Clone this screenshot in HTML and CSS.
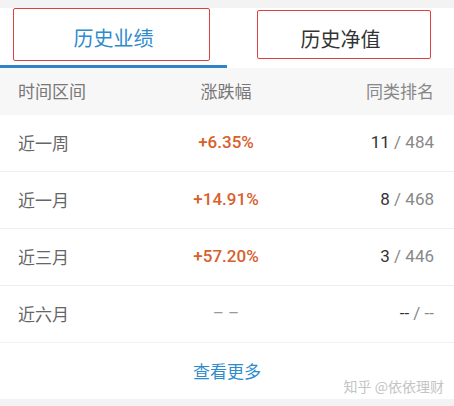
FILE: index.html
```html
<!DOCTYPE html>
<html lang="zh-CN">
<head>
  <meta charset="UTF-8" />
  <meta name="viewport" content="width=device-width, initial-scale=1.0"/>
  <title>历史业绩</title>
  <link rel="stylesheet" href="styles.css">
</head>
<body>

  <div class="tabs">
    <div class="tab active">历史业绩<span class="mark mark-a"></span></div>
    <div class="tab">历史净值<span class="mark mark-b"></span></div>
  </div>

  <div class="row head">
    <div>时间区间</div>
    <div class="mid">涨跌幅</div>
    <div class="right">同类排名</div>
  </div>

  <div class="row">
    <div>近一周</div>
    <div class="mid num up">+6.35%</div>
    <div class="right num"><b>11</b> / 484</div>
  </div>
  <div class="row">
    <div>近一月</div>
    <div class="mid num up">+14.91%</div>
    <div class="right num"><b>8</b> / 468</div>
  </div>
  <div class="row">
    <div>近三月</div>
    <div class="mid num up">+57.20%</div>
    <div class="right num"><b>3</b> / 446</div>
  </div>
  <div class="row last">
    <div>近六月</div>
    <div class="mid num none">– –</div>
    <div class="right num"><b>--</b> / --</div>
  </div>

  <div class="more">
    查看更多
    <span class="watermark">知乎 @依依理财</span>
  </div>

</body>
</html>
```

FILE: styles.css
```css
body {
  margin: 0;
  padding: 8px 0 9px;
  background: #f3f3f3;
  font-family: "Noto Sans CJK SC", sans-serif;
  color: #666;
}
.tabs {
  display: flex;
  background: #fff;
  height: 60px;
}
.tab {
  position: relative;
  flex: 1;
  display: flex;
  align-items: center;
  justify-content: center;
  font-size: 20px;
  color: #333;
  box-sizing: border-box;
  padding-top: 1px;
}
.tab.active {
  color: #2e8bcc;
  border-bottom: 3px solid #2f84c9;
}
.mark {
  position: absolute;
  border: 1.5px solid #d9423f;
  border-radius: 2px;
}
.mark-a {
  left: 13px;
  top: 0;
  width: 195px;
  height: 51px;
}
.mark-b {
  left: 30px;
  top: 2px;
  width: 172px;
  height: 47px;
}
.row {
  display: grid;
  grid-template-columns: 1fr 1fr 1fr;
  align-items: center;
  padding: 0 20px 2px 18px;
  height: 54px;
  background: #fff;
  border-bottom: 1px solid #eeeeee;
  font-size: 17px;
}
.row.head {
  height: 45px;
  background: #f7f7f7;
  border-bottom: none;
  color: #777;
}
.row.last {
  border-bottom: none;
}
.mid {
  text-align: center;
}
.right {
  text-align: right;
  color: #888;
}
.num {
  font-family: Roboto, "Noto Sans CJK SC", sans-serif;
  font-size: 17px;
}
.right b {
  font-weight: normal;
  color: #333;
}
.up {
  color: #d8602c;
  font-weight: 500;
}
.none {
  color: #999;
}
.more {
  position: relative;
  background: #fff;
  height: 54px;
  border-top: 1px solid #f2f2f2;
  display: flex;
  align-items: center;
  justify-content: center;
  color: #2e8bcc;
  font-size: 17px;
  padding-bottom: 2px;
}
.watermark {
  position: absolute;
  right: 10px;
  bottom: 3px;
  font-size: 14px;
  color: #c4c4c4;
}
```
